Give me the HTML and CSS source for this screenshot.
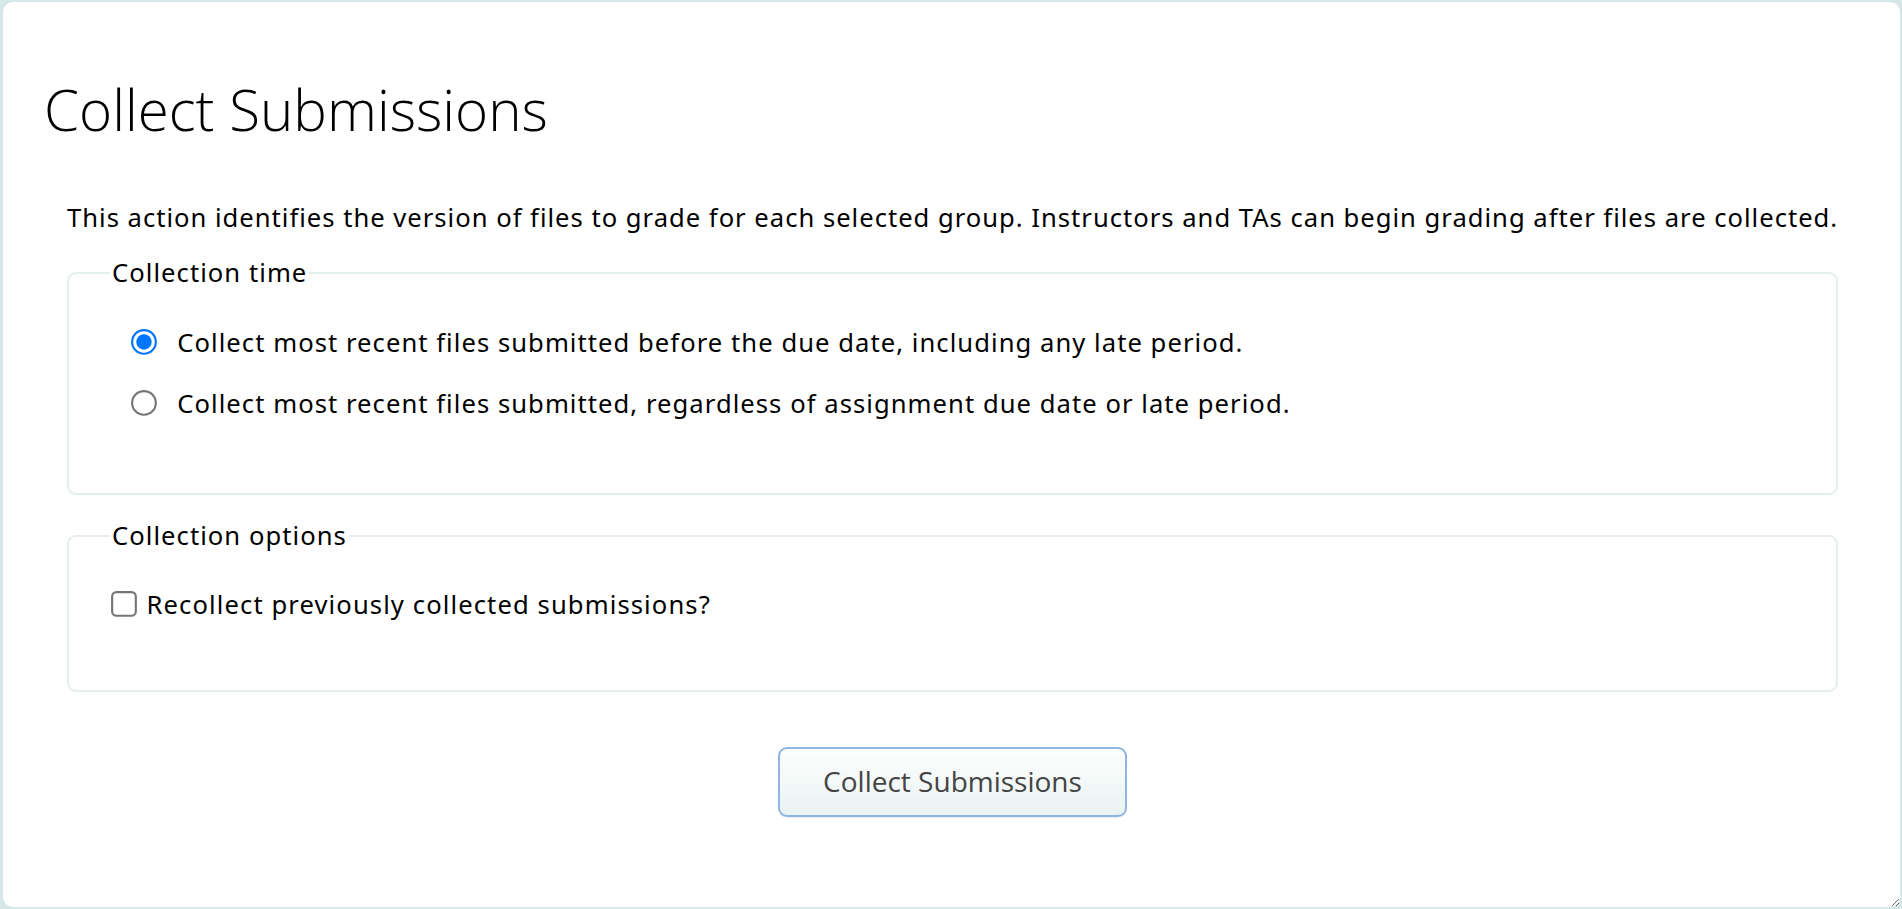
FILE: index.html
```html
<!DOCTYPE html>
<html lang="en">
<head>
<meta charset="utf-8">
<title>Collect Submissions</title>
<link rel="stylesheet" href="styles.css">
</head>
<body>
<div class="dialog">
  <h1 class="title">Collect Submissions</h1>
  <form class="body">
    <p class="intro">This action identifies the version of files to grade for each selected group. Instructors and TAs can begin grading after files are collected.</p>
    <fieldset class="group group-time">
      <legend class="legend">Collection time</legend>
      <label class="option option-radio">
        <input class="radio" type="radio" name="time" checked>
        <span class="option-text">Collect most recent files submitted before the due date, including any late period.</span>
      </label>
      <label class="option option-radio">
        <input class="radio" type="radio" name="time">
        <span class="option-text">Collect most recent files submitted, regardless of assignment due date or late period.</span>
      </label>
    </fieldset>
    <fieldset class="group group-options">
      <legend class="legend">Collection options</legend>
      <label class="option option-check">
        <input class="checkbox" type="checkbox">
        <span class="option-text">Recollect previously collected submissions?</span>
      </label>
    </fieldset>
    <div class="actions">
      <button class="button" type="button">Collect Submissions</button>
    </div>
  </form>
</div>
</body>
</html>
```
FILE: styles.css
```css
html, body {
  margin: 0;
  padding: 0;
  height: 100%;
}

body {
  background: #d6e7ea;
  font-family: "Noto Sans", "Open Sans", "Liberation Sans", sans-serif;
  color: #000;
}

.dialog {
  box-sizing: border-box;
  margin: 2px 2px 2px 3px;
  height: 905px;
  background: #fff;
  border-radius: 10px;
  padding: 69px 41px 0 41px;
  overflow: auto;
  resize: both;
}

.title {
  margin: 0;
  font-family: "Open Sans", "Noto Sans", sans-serif;
  font-weight: 300;
  font-size: 56.5px;
  line-height: normal;
  color: #000;
}

.body {
  padding: 0 21px 0 23px;
  margin: 0;
  letter-spacing: 1.1px;
}

.intro {
  margin: 52px 0 0 0;
  font-size: 25.6px;
  line-height: normal;
  letter-spacing: 1px;
  white-space: nowrap;
}

.group {
  margin: 20px 0 0 0;
  padding: 35px 20px 72px 41px;
  border: 2px solid #e5f0ee;
  border-radius: 9px;
  min-width: 0;
}

.group-options {
  margin-top: 23px;
  padding-top: 34px;
  padding-bottom: 68px;
}

.legend {
  padding: 0 2px;
  font-size: 25.6px;
  line-height: normal;
  letter-spacing: 1.05px;
}

.option {
  display: flex;
  align-items: center;
  font-size: 25.6px;
  line-height: normal;
}

.option-radio {
  margin-left: 20px;
  letter-spacing: 1.05px;
}

.option-radio + .option-radio {
  margin-top: 26px;
}

.radio {
  margin: 0 9px 0 0;
  zoom: 2.15;
}

.checkbox {
  margin: 0 4px 0 0;
  zoom: 2.15;
}

.actions {
  display: flex;
  justify-content: center;
  margin-top: 55px;
}

.button {
  font-family: "Open Sans", "Noto Sans", sans-serif;
  font-size: 28px;
  line-height: normal;
  letter-spacing: normal;
  color: #444;
  padding: 13px 43px 15px;
  border: 2px solid #8fb6e2;
  border-radius: 9px;
  background: linear-gradient(#fdfefe, #e9f3f2);
  box-shadow: 0 1px 1px rgba(0, 0, 0, 0.08);
  cursor: pointer;
}
```
